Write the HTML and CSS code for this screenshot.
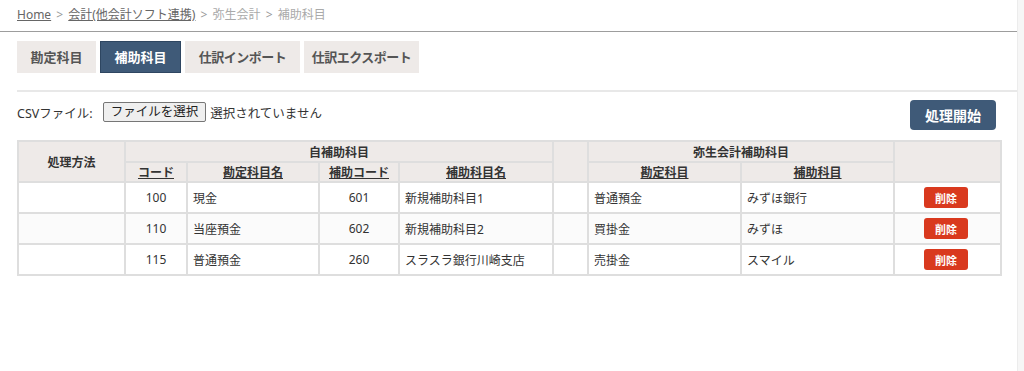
FILE: index.html
```html
<!DOCTYPE html>
<html lang="ja">
<head>
    <meta charset="UTF-8">
    <meta name="viewport" content="width=device-width, initial-scale=1.0">
    <title>補助科目</title>
    <link rel="stylesheet" href="styles.css">
</head>
<body>

<div class="page">
    <div class="main">
        <div class="breadcrumb">
            <a href="#">Home</a>
            <span class="sep">&gt;</span>
            <a href="#">会計(他会計ソフト連携)</a>
            <span class="sep">&gt;</span>
            <span class="current">弥生会計</span>
            <span class="sep">&gt;</span>
            <span class="current">補助科目</span>
        </div>

        <div class="content">
            <div class="tabs">
                <a href="#" class="tab">勘定科目</a>
                <a href="#" class="tab active">補助科目</a>
                <a href="#" class="tab wide">仕訳インポート</a>
                <a href="#" class="tab wide">仕訳エクスポート</a>
            </div>

            <div class="divider"></div>

            <div class="toolbar">
                <div class="file-field">
                    <span class="file-label">CSVファイル:</span>
                    <button type="button" class="file-btn">ファイルを選択</button>
                    <span class="file-name">選択されていません</span>
                </div>
                <button type="button" class="btn-start">処理開始</button>
            </div>

            <table class="grid">
                <colgroup>
                    <col style="width:107px">
                    <col style="width:62px">
                    <col style="width:132px">
                    <col style="width:80px">
                    <col style="width:154px">
                    <col style="width:35px">
                    <col style="width:153px">
                    <col style="width:153px">
                    <col style="width:107px">
                </colgroup>
                <thead>
                    <tr class="head-top">
                        <th rowspan="2">処理方法</th>
                        <th colspan="4">自補助科目</th>
                        <th rowspan="2"></th>
                        <th colspan="2">弥生会計補助科目</th>
                        <th rowspan="2"></th>
                    </tr>
                    <tr class="head-sub">
                        <th><a href="#">コード</a></th>
                        <th><a href="#">勘定科目名</a></th>
                        <th><a href="#">補助コード</a></th>
                        <th><a href="#">補助科目名</a></th>
                        <th><a href="#">勘定科目</a></th>
                        <th><a href="#">補助科目</a></th>
                    </tr>
                </thead>
                <tbody>
                    <tr>
                        <td></td>
                        <td class="num">100</td>
                        <td>現金</td>
                        <td class="num">601</td>
                        <td>新規補助科目1</td>
                        <td></td>
                        <td>普通預金</td>
                        <td>みずほ銀行</td>
                        <td class="action"><button type="button" class="btn-del">削除</button></td>
                    </tr>
                    <tr>
                        <td></td>
                        <td class="num">110</td>
                        <td>当座預金</td>
                        <td class="num">602</td>
                        <td>新規補助科目2</td>
                        <td></td>
                        <td>買掛金</td>
                        <td>みずほ</td>
                        <td class="action"><button type="button" class="btn-del">削除</button></td>
                    </tr>
                    <tr>
                        <td></td>
                        <td class="num">115</td>
                        <td>普通預金</td>
                        <td class="num">260</td>
                        <td>スラスラ銀行川崎支店</td>
                        <td></td>
                        <td>売掛金</td>
                        <td>スマイル</td>
                        <td class="action"><button type="button" class="btn-del">削除</button></td>
                    </tr>
                </tbody>
            </table>
        </div>
    </div>
    <div class="scroll-track"></div>
</div>

</body>
</html>
```

FILE: styles.css
```css
body {
    margin: 0;
    font-family: "Noto Sans", "Noto Sans CJK JP", sans-serif;
    font-size: 12px;
    color: #333;
    background: #fff;
}

.page {
    display: flex;
    height: 371px;
}

.main {
    flex: 1;
}

.scroll-track {
    width: 6px;
    background: #f6f6f6;
    border-left: 1px solid #ececec;
}

/* パンくず */
.breadcrumb {
    height: 32px;
    box-sizing: border-box;
    padding: 6px 0 0 17px;
    line-height: 18px;
    font-size: 12px;
    border-bottom: 1px solid #9d9d9d;
    color: #999;
}

.breadcrumb a {
    color: #666;
    text-decoration: underline;
}

.breadcrumb .sep {
    margin: 0 2px;
    color: #999;
}

.breadcrumb .current {
    color: #aaa;
}

.content {
    padding: 9px 0 0 17px;
}

/* タブ */
.tabs {
    display: flex;
    gap: 4px;
}

.tab {
    display: block;
    width: 79px;
    height: 32px;
    line-height: 32px;
    text-align: center;
    background: #eeeae8;
    color: #555;
    font-weight: bold;
    font-size: 13px;
    text-decoration: none;
    box-sizing: border-box;
    white-space: nowrap;
}

.tab.wide {
    width: 115px;
    letter-spacing: -0.5px;
}

.tab.active {
    width: 81px;
    background: #3f5a78;
    color: #fff;
    border: 1px solid #2e4661;
    line-height: 30px;
}

.divider {
    height: 2px;
    background: #e8e8e8;
    margin-top: 17px;
}

/* CSV */
.toolbar {
    display: flex;
    justify-content: space-between;
    align-items: flex-start;
    padding: 8px 21px 0 0;
}

.file-field {
    display: flex;
    align-items: center;
    font-size: 12.5px;
    padding-top: 2px;
}

.file-label {
    margin-right: 10px;
}

.file-btn {
    font-family: inherit;
    font-size: 12.5px;
    height: 20px;
    line-height: 16px;
    padding: 0 7px;
    background: #efefef;
    border: 1px solid #767676;
    border-radius: 2px;
    color: #222;
}

.file-name {
    margin-left: 4px;
}

.btn-start {
    width: 86px;
    height: 30px;
    background: #3f5a78;
    color: #fff;
    font-family: inherit;
    font-size: 14px;
    font-weight: bold;
    border: none;
    border-radius: 4px;
}

/* 一覧 */
.grid {
    margin-top: 10px;
    width: 983px;
    table-layout: fixed;
    border-collapse: collapse;
    border: 2px solid #dedede;
}

.grid th,
.grid td {
    border: 2px solid #dedede;
    padding: 0 5px;
    font-size: 12px;
}

.grid th {
    background: #eeeae8;
    font-weight: bold;
    text-align: center;
    color: #333;
}

.grid th a {
    color: #333;
    text-decoration: underline;
}

.head-top th {
    height: 19px;
}

.head-sub th {
    height: 18px;
}

.grid td {
    height: 29px;
    background: #fff;
}

.grid tbody tr:nth-child(even) td {
    background: #fbfbfb;
}

.grid td.num {
    text-align: center;
}

.grid td.action {
    text-align: center;
    padding-right: 8px;
}

.btn-del {
    width: 44px;
    height: 21px;
    background: #d9391e;
    color: #fff;
    font-family: inherit;
    font-size: 11px;
    font-weight: bold;
    border: none;
    border-radius: 3px;
    padding: 0;
}
```
